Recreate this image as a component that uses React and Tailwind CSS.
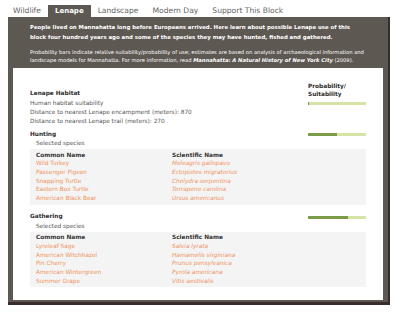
const tabs = ["Wildlife", "Lenape", "Landscape", "Modern Day", "Support This Block"];

const hunting = [
  ["Wild Turkey", "Meleagris gallopavo"],
  ["Passenger Pigeon", "Ectopistes migratorius"],
  ["Snapping Turtle", "Chelydra serpentina"],
  ["Eastern Box Turtle", "Terrapene carolina"],
  ["American Black Bear", "Ursus americanus"],
];

const gathering = [
  ["Lyreleaf Sage", "Salvia lyrata"],
  ["American Witchhazel", "Hamamelis virginiana"],
  ["Pin Cherry", "Prunus pensylvanica"],
  ["American Wintergreen", "Pyrola americana"],
  ["Summer Grape", "Vitis aestivalis"],
];

function Bar({ value }) {
  return (
    <div className="w-[58px] h-[3px] bg-[#d5e3a5] flex">
      <div className="h-full bg-[#7b9b47]" style={{ width: `${value}%` }} />
    </div>
  );
}

function SpeciesTable({ rows }) {
  return (
    <div className="bg-[#f4f4f4] w-[336px] pt-[1px] pb-[2px]">
      <div className="flex h-[9px] items-center font-bold text-[#333]">
        <div className="w-[142px] pl-[6px]">Common Name</div>
        <div>Scientific Name</div>
      </div>
      {rows.map(([common, sci]) => (
        <div key={common} className="flex h-[8.7px] items-center text-[#ef9361]">
          <div className="w-[142px] pl-[6px]">{common}</div>
          <div className="italic">{sci}</div>
        </div>
      ))}
    </div>
  );
}

function Section({ title, value, rows }) {
  return (
    <div>
      <div className="flex justify-between items-center h-[9px]">
        <div className="font-bold text-[#2b2b2b]">{title}</div>
        <div className="mt-[2px]">
          <Bar value={value} />
        </div>
      </div>
      <div className="pl-[6px] h-[9px] leading-[9px] mt-[1px]">Selected species</div>
      <div className="mt-[1px]">
        <SpeciesTable rows={rows} />
      </div>
    </div>
  );
}

export default function App() {
  return (
    <div className="w-[400px] h-[313px] bg-white overflow-hidden font-['DejaVu_Sans',sans-serif]">
      {/* Tabs */}
      <div className="flex pl-[6px] pt-[5px] h-[17px]">
        {tabs.map((t) =>
          t === "Lenape" ? (
            <div key={t} className="px-[7px] h-[12px] flex items-center bg-[#5e5853] text-white font-bold text-[7px]">
              {t}
            </div>
          ) : (
            <div key={t} className="px-[7px] h-[12px] flex items-center text-[#666] text-[7.6px]">
              {t}
            </div>
          )
        )}
      </div>

      {/* Panel */}
      <div className="ml-[8px] w-[382px] h-[288px] bg-[#5e5853] border-r-[2px] border-b-[3px] border-[#3a2c2a] flex flex-col">
        <div className="px-[22px] pt-[5px] text-white">
          <p className="font-bold text-[5.4px] leading-[10px]">
            People lived on Mannahatta long before Europeans arrived. Here learn about possible Lenape use of this block four hundred years ago and some of the species they may have hunted, fished and gathered.
          </p>
          <p className="text-[5.2px] leading-[8px] mt-[6px]">
            Probability bars indicate relative suitability/probability of use; estimates are based on analysis of archaeological information and landscape models for Mannahatta. For more information, read{" "}
            <span className="font-bold italic">Mannahatta: A Natural History of New York City</span> (2009).
          </p>
        </div>

        {/* White content box */}
        <div className="mx-[5px] mt-[4px] mb-[2px] flex-1 bg-white px-[17px] pt-[14px] text-[5.8px] text-[#555]">
          <div className="flex justify-between items-end">
            <div className="font-bold text-[#2b2b2b] leading-[9px]">Lenape Habitat</div>
            <div className="w-[58px] font-bold text-[#2b2b2b] leading-[8px]">
              Probability/
              <br />
              Suitability
            </div>
          </div>
          <div className="flex justify-between items-center h-[9px] mt-[1px]">
            <div>Human habitat suitability</div>
            <Bar value={2} />
          </div>
          <div className="h-[8.7px] leading-[8.7px]">Distance to nearest Lenape encampment (meters): 870</div>
          <div className="h-[8.7px] leading-[8.7px]">Distance to nearest Lenape trail (meters): 270</div>

          <div className="mt-[4px]">
            <Section title="Hunting" value={50} rows={hunting} />
          </div>
          <div className="mt-[7px]">
            <Section title="Gathering" value={69} rows={gathering} />
          </div>
        </div>
      </div>
    </div>
  );
}
